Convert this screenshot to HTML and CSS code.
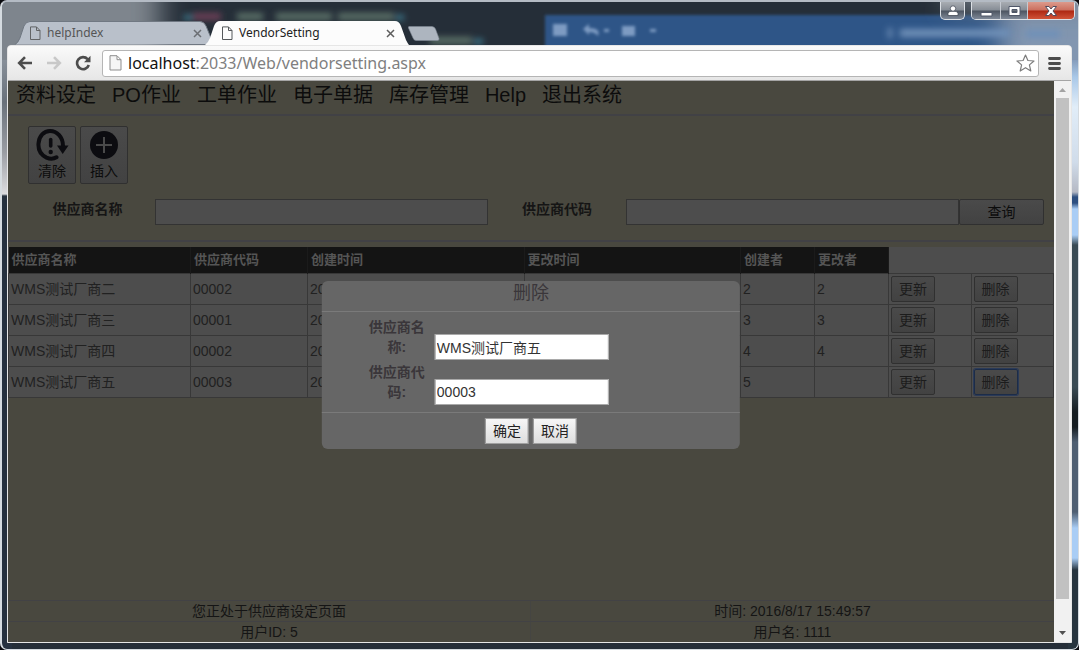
FILE: index.html
```html
<!DOCTYPE html>
<html lang="zh-CN">
<head>
<meta charset="utf-8">
<title>VendorSetting</title>
<link rel="stylesheet" href="styles.css">
</head>
<body>
<div class="window">
  <header class="titlebar">
    <svg class="glass" width="1079" height="60" viewBox="0 0 1079 60" aria-hidden="true">
      <defs>
        <filter id="soft" x="-20%" y="-50%" width="140%" height="200%"><feGaussianBlur stdDeviation="3"/></filter>
        <filter id="edge" x="-20%" y="-50%" width="140%" height="200%"><feGaussianBlur stdDeviation="1.500"/></filter>
        <filter id="wide" x="-50%" y="-50%" width="200%" height="200%"><feGaussianBlur stdDeviation="14"/></filter>
      </defs>
      <path d="M545 15H1100V70H545z" fill="#2e5487" filter="url(#edge)"/>
      <g filter="url(#wide)">
        <rect x="-40" y="-30" width="200" height="120" fill="#7e858d"/>
        <rect x="1000" y="10" width="130" height="80" fill="#8296b0"/>
        <rect x="950" y="-20" width="160" height="28" fill="#7d858f"/>
      </g>
      <g filter="url(#edge)" fill="#7e9bc2">
        <path d="M553 24h14v12h-14zM583 29l6-5v4q12 0 9 8q-3-4-9-4v3zM622 26h13v10h-13zM650 29h6v3h-6zM604 29h5v3h-5z"/>
      </g>
      <g filter="url(#soft)">
        <path d="M900 29h110v8h-110zM1026 30h34v8h-34zM888 28h4v10h-4z" fill="#7090b8"/>
        <path d="M193 13h28v7h-28z" fill="#6d4056"/><path d="M237 13h26v7h-26zM276 13h56v7h-56zM338 13h56v7h-56zM430 37h42v7h-42z" fill="#5c7168"/>
        <path d="M184 15h8v5h-8zM396 15h8v5h-8zM474 39h9v5h-9z" fill="#3e7c90"/>
      </g>
    </svg>
    <nav class="tabs" aria-label="标签页">
      <div class="tab tab-idle">
        <svg class="tab-shape" viewBox="0 0 198 24" preserveAspectRatio="none" aria-hidden="true"><path d="M0 23.500Q3 22 5 17L9 5Q11 .5 15 .5H186Q190 .5 192 5L197 17Q199 23 203 23.500" fill="#b9c0ca" stroke="#6f7782"/></svg>
        <div class="tab-content">
          <svg width="12" height="15" viewBox="0 0 12 15" fill="none" stroke="#626466"><path d="M1.500.900H7.500L11 4.500V13.500H1.500zM7.500 1V4.500H11"/></svg>
          <span class="tab-name">helpIndex</span>
          <button class="tab-close" aria-label="关闭 helpIndex"><svg width="9" height="9" viewBox="0 0 9 9" stroke="#6b6e73" stroke-width="1.500"><path d="M1 1L8 8M8 1L1 8"/></svg></button>
        </div>
      </div>
      <div class="tab tab-current">
        <svg class="tab-shape" viewBox="0 0 204 24" preserveAspectRatio="none" aria-hidden="true"><path d="M0 24Q3 22 5 17L9 5Q11 0 15 0H190Q194 0 196 5L201 19Q203 23 204 24" fill="#fcfcfc"/></svg>
        <div class="tab-content">
          <svg width="12" height="15" viewBox="0 0 12 15" fill="none" stroke="#55585b"><path d="M1.500.900H7.500L11 4.500V13.500H1.500zM7.500 1V4.500H11"/></svg>
          <span class="tab-name">VendorSetting</span>
          <button class="tab-close" aria-label="关闭 VendorSetting"><svg width="9" height="9" viewBox="0 0 9 9" stroke="#5d5d5d" stroke-width="1.500"><path d="M1 1L8 8M8 1L1 8"/></svg></button>
        </div>
      </div>
      <button class="new-tab" aria-label="新标签页"><svg width="32" height="15" viewBox="0 0 32 15"><path d="M1 .500H24Q26.500.500 27.500 3L31 12.500Q31.500 14.500 29.500 14.500H8Q6 14.500 5 12L.5 2Q0 .5 1 .5z" fill="#adb5bf" stroke="#7f8893" stroke-width=".6"/></svg></button>
    </nav>
    <div class="controls">
      <button class="control user" aria-label="用户"><svg width="12" height="11" viewBox="0 0 12 11" fill="#fff" stroke="#454b58" stroke-width=".8"><path d="M1 10.500V8.500Q1 6.500 4 6.300H8Q11 6.500 11 8.500V10.500z"/><circle cx="6" cy="3.500" r="2.700"/></svg></button>
      <div class="control-set">
        <button class="control" aria-label="最小化"><svg width="13" height="12" viewBox="0 0 13 12"><path d="M1 7.500H12V11H1z" fill="#fff" stroke="#50586a"/></svg></button>
        <button class="control control-max" aria-label="最大化"><svg width="13" height="12" viewBox="0 0 13 12"><path d="M1 1.500H12V10.500H1zM4 4.500V7.500H9V4.500z" fill="#fff" fill-rule="evenodd" stroke="#50586a"/></svg></button>
        <button class="control control-close" aria-label="关闭"><svg width="14" height="12" viewBox="0 0 14 12"><path d="M1.500 1.500H5L7 4L9 1.500H12.500L9 6L12.500 10.500H9L7 8L5 10.500H1.500L5 6z" fill="#fff" stroke="#514b5c"/></svg></button>
      </div>
    </div>
  </header>

  <div class="browser">
    <div class="toolbar">
      <button class="tool" aria-label="后退"><svg width="16" height="14" viewBox="0 0 16 14" fill="none" stroke="#4d4d4d" stroke-width="2.600"><path d="M15 7H2.500M8 1.200L2.200 7L8 12.800"/></svg></button>
      <button class="tool" aria-label="前进"><svg width="16" height="14" viewBox="0 0 16 14" fill="none" stroke="#c8c8c8" stroke-width="2.600"><path d="M1 7H13.500M8 1.200L13.800 7L8 12.800"/></svg></button>
      <button class="tool" aria-label="刷新"><svg width="16" height="16" viewBox="0 0 16 16"><path d="M12.600 4.200A6 6 0 1 0 13.800 10" fill="none" stroke="#4d4d4d" stroke-width="2.600"/><path d="M15.500.800V7.200H9z" fill="#4d4d4d"/></svg></button>
      <div class="address">
        <svg width="13" height="16" viewBox="0 0 13 16" fill="#f5f5f5" stroke="#8d8d8d"><path d="M1 .700H8L12 4.700V15H1zM8 1V4.700H12"/></svg>
        <div class="url"><span class="host">localhost</span>:2033/Web/vendorsetting.aspx</div>
        <button class="tool" aria-label="收藏"><svg width="19" height="18" viewBox="0 0 19 18" fill="#fff" stroke="#7d7d7d" stroke-width="1.200" stroke-linejoin="round"><path d="M9.500 1L11.900 6.500L18 7L13.400 10.900L14.800 17L9.500 13.700L4.200 17L5.600 10.900L1 7L7.100 6.500z"/></svg></button>
      </div>
      <button class="tool" aria-label="菜单"><svg width="13" height="13" viewBox="0 0 13 13" stroke="#4d4d4d" stroke-width="2.800" stroke-linecap="round"><path d="M1.500 1.500H11.500M1.500 6.500H11.500M1.500 11.500H11.500"/></svg></button>
    </div>

    <div class="viewport">
      <main class="page">
        <nav class="menu">
          <a href="#">资料设定</a><a href="#">PO作业</a><a href="#">工单作业</a><a href="#">电子单据</a><a href="#">库存管理</a><a href="#">Help</a><a href="#">退出系统</a>
        </nav>
        <section class="panel">
          <div class="actions">
            <button class="action">
              <svg width="34" height="34" viewBox="0 0 34 34"><path d="M21.500 29.300Q17 32 11.500 29.600C6 27 3 22 3.500 15.500C4 8 9 3 15 3C22 3 28 9 28 18" fill="none" stroke="#0c0c10" stroke-width="4" stroke-linecap="round"/><path d="M22 17.500H33.500L27.700 26z" fill="#0c0c10"/><path d="M15.700 11.500V18" stroke="#0c0c10" stroke-width="3.600" stroke-linecap="round"/><circle cx="15.700" cy="24" r="2.200" fill="#0c0c10"/></svg>
              清除
            </button>
            <button class="action">
              <svg width="34" height="34" viewBox="0 0 34 34"><circle cx="17" cy="17" r="14" fill="#0c0c10"/><path d="M9 17H25M17 9V25" stroke="#4a4a4a" stroke-width="2"/></svg>
              插入
            </button>
          </div>
          <form class="search">
            <label for="q-name">供应商名称</label>
            <input id="q-name" type="text">
            <label for="q-code">供应商代码</label>
            <input id="q-code" type="text">
            <button type="button">查询</button>
          </form>
        </section>

        <table class="vendors">
          <colgroup><col class="c-name"><col class="c-code"><col class="c-time"><col class="c-time"><col class="c-user"><col class="c-user"><col class="c-act"><col class="c-act"></colgroup>
          <thead>
            <tr><th>供应商名称</th><th>供应商代码</th><th>创建时间</th><th>更改时间</th><th>创建者</th><th>更改者</th><td colspan="2"></td></tr>
          </thead>
          <tbody>
            <tr><td>WMS测试厂商二</td><td>00002</td><td>20</td><td></td><td>2</td><td>2</td><td><button>更新</button></td><td><button>删除</button></td></tr>
            <tr><td>WMS测试厂商三</td><td>00001</td><td>20</td><td></td><td>3</td><td>3</td><td><button>更新</button></td><td><button>删除</button></td></tr>
            <tr><td>WMS测试厂商四</td><td>00002</td><td>20</td><td></td><td>4</td><td>4</td><td><button>更新</button></td><td><button>删除</button></td></tr>
            <tr><td>WMS测试厂商五</td><td>00003</td><td>20</td><td></td><td>5</td><td></td><td><button>更新</button></td><td><button class="focused">删除</button></td></tr>
          </tbody>
        </table>

        <footer class="status">
          <div>您正处于供应商设定页面</div><div>时间: 2016/8/17 15:49:57</div>
          <div>用户ID: 5</div><div>用户名: 1111</div>
        </footer>

        <form class="dialog" role="dialog" aria-labelledby="dialog-title">
          <h2 id="dialog-title">删除</h2>
          <div class="fields">
            <div class="field"><label for="d-name">供应商名称:</label><input id="d-name" type="text" value="WMS测试厂商五"></div>
            <div class="field"><label for="d-code">供应商代码:</label><input id="d-code" type="text" value="00003"></div>
          </div>
          <div class="dialog-actions"><button type="button">确定</button><button type="button">取消</button></div>
        </form>
      </main>
      <div class="scrollbar" aria-hidden="true">
        <svg width="17" height="17" viewBox="0 0 17 17"><path d="M5 11L8.500 7L12 11z" fill="#a3a3a3"/></svg>
        <div class="track"><div class="thumb"></div></div>
        <svg width="17" height="17" viewBox="0 0 17 17"><path d="M5 6L8.500 10L12 6z" fill="#505050"/></svg>
      </div>
    </div>
  </div>
</div>
</body>
</html>
```
FILE: styles.css
```css
* { box-sizing: border-box; }
body {
  margin: 0;
  background: #08080c;
  font: 14px/20px "Liberation Sans", "Noto Sans CJK SC", sans-serif;
}
button, input { font: inherit; }
button { cursor: pointer; }

.window {
  position: relative;
  display: flex;
  flex-direction: column;
  height: 100vh;
  padding: 0 6px 6px 5px;
  border: 1px solid #d5dbe0;
  border-width: 2px 1px 1px 2px;
  border-top-color: #b4bbc4;
  border-radius: 7px;
  overflow: hidden;
  background:
    linear-gradient(#7488a6 0 50px, #a9c8e8 75px, #e1edf8 105px, #d0dcea 160px, #b5b9c4 190px, #2d4f80 195px 201px, #a9cdf5 207px 233px, #3a4b54 243px 385px, #161d22 410px 425px, #4f5f72 440px 510px, #a9cdf5 526px 556px, #27343e 568px) right / 10px 100% no-repeat,
    linear-gradient(#868e98 0 60px, #69717b 100px, #9a9da3 150px, #dcdcdf 192px, #26313f 194px) left / 10px 100% no-repeat,
    #252e38;
}

.titlebar {
  position: relative;
  display: flex;
  justify-content: space-between;
  align-items: flex-start;
  height: 43px;
  flex: none;
}
.glass { position: absolute; left: -7px; top: -2px; width: calc(100% + 14px); height: 60px; }
.tabs { position: relative; display: flex; align-items: flex-start; padding: 19px 0 0 8px; }
.tab { display: grid; height: 24px; }
.tab > * { grid-area: 1 / 1; }
.tab-idle { width: 197px; }
.tab-current { width: 204px; margin-left: -7px; }
.tab-shape { width: 100%; height: 24px; }
.tab-content {
  display: flex;
  align-items: center;
  gap: 6px;
  padding: 0 10px 0 14px;
  font: 12px/24px "Noto Sans", sans-serif;
  color: #555;
}
.tab-current .tab-content { padding-right: 14px; padding-left: 16px; color: #222; }
.tab-name { flex: 1; }
.tab-close, .tool, .new-tab {
  display: grid;
  place-items: center;
  padding: 0;
  border: 0;
  background: none;
}
.new-tab { margin-top: 5px; margin-left: -1px; }

.controls { position: relative; display: flex; gap: 6px; margin-right: -3px; }
.control {
  display: grid;
  place-items: center;
  width: 29px;
  height: 17px;
  padding: 0;
  border: 0;
  border-right: 1px solid #c5cad1;
  background: linear-gradient(#a9adb2, #858c95 48%, #4c5460 52%, #7e8897);
}
.control.user, .control-set {
  border: 1px solid #dce0e5;
  border-top: 0;
  border-radius: 0 0 5px 5px;
  overflow: hidden;
}
.control.user { width: 25px; height: 18px; }
.control-set { display: flex; }
.control-max { width: 27px; }
.control-close { width: 46px; border-right: 0; background: linear-gradient(#dc9a8c, #cb6f5e 48%, #ad2712 52%, #d05338); }

.browser {
  position: relative;
  flex: 1;
  min-height: 0;
  display: flex;
  flex-direction: column;
  border: 1px solid #e6e6e6;
  border-radius: 4px 4px 0 0;
  background: #efefef;
  overflow: hidden;
}
.toolbar {
  display: flex;
  align-items: center;
  gap: 13px;
  height: 35px;
  padding: 0 10px 0 9px;
  border-bottom: 1px solid #a5a5a5;
  background: linear-gradient(#fafafa, #e6e6e6);
}
.address {
  flex: 1;
  display: flex;
  align-items: center;
  gap: 6px;
  height: 27px;
  margin-right: -4px;
  margin-left: -2px;
  padding: 0 3px 0 6px;
  border: 1px solid #b5b5b5;
  border-radius: 3px;
  background: #fff;
}
.url { flex: 1; font: 16px/25px "Noto Sans", sans-serif; color: #808080; }
.host { color: #111; }

.viewport { flex: 1; min-height: 0; display: flex; }
.page {
  position: relative;
  flex: 1;
  min-width: 0;
  display: flex;
  flex-direction: column;
  background: #49483f;
  color: #151515;
}
.menu {
  display: flex;
  gap: 16px;
  height: 35px;
  padding: 0 8px;
  border-bottom: 2px solid #414145;
  font-size: 20px;
  line-height: 29px;
}
.menu a { color: #0c0c0c; text-decoration: none; white-space: nowrap; }
.panel { padding: 10px 10px 15px 12px; border-bottom: 2px solid #414145; }
.actions { display: flex; gap: 4px; padding-left: 8px; }
.page button {
  border: 1px solid #303030;
  border-radius: 2px;
  background: linear-gradient(#4a4a4a, #424242);
  color: #1c1c1c;
}
.page .action {
  display: flex;
  flex-direction: column;
  align-items: center;
  width: 48px;
  height: 58px;
  padding: 1px 0 0;
  line-height: 18px;
  color: #0c0c0c;
}
.search {
  display: grid;
  grid-template-columns: 135px 1fr 138px 1fr 85px;
  margin-top: 15px;
}
.search label { text-align: center; font-weight: bold; }
.search input { min-width: 0; height: 26px; border: 1px solid #333; background: #4d4d4d; }
.page .search button { padding: 0; color: #0c0c0c; }

.vendors {
  width: 100%;
  margin-top: 5px;
  border-collapse: collapse;
  table-layout: fixed;
  background: #4d4d4d;
  color: #212121;
}
.c-name { width: 182px; }
.c-code { width: 117px; }
.c-time { width: 21%; }
.c-user { width: 74px; }
.c-act { width: 8%; }
.vendors th {
  height: 26px;
  padding: 0 3px;
  border-right: 1px solid #1b1b1b;
  background: #141414;
  color: #555;
  font-size: 13px;
  text-align: left;
}
.vendors tbody td { height: 31px; padding: 0 2px; border: 1px solid #383838; }
.vendors button, .dialog-actions button { display: block; width: 44px; height: 26px; padding: 0; }
.page .focused { border-color: #1c2c48; box-shadow: 0 0 0 1px #2a3a58; }

.status { display: grid; grid-template-columns: 1fr 1fr; margin-top: auto; text-align: center; }
.status div { height: 21px; border-top: 1px solid #424245; }
.status div:nth-child(odd) { border-right: 1px solid #454542; }

.dialog {
  position: absolute;
  top: 200px;
  left: 50%;
  width: 40%;
  transform: translateX(-50%);
  border-radius: 6px;
  background: #666;
  color: #3a363a;
}
.dialog h2 {
  height: 31px;
  margin: 0;
  border-bottom: 1px solid #7a7a7a;
  font-size: 18px;
  font-weight: normal;
  line-height: 24px;
  text-align: center;
}
.fields { padding: 5px 0 5px 45px; }
.field { display: flex; align-items: flex-end; gap: 8px; height: 45px; }
.field label { width: 60px; align-self: flex-start; font-weight: bold; text-align: center; }
.field input {
  width: 174px;
  height: 26px;
  margin-bottom: 2px;
  padding: 0 1px;
  border: 1px solid #a9a9a9;
  background: #fff;
  color: #333;
}
.dialog-actions {
  display: flex;
  justify-content: center;
  gap: 4px;
  padding: 5px;
  border-top: 1px solid #7a7a7a;
}
.page .dialog-actions button {
  border-color: #a0a0a0;
  border-radius: 0;
  background: linear-gradient(#f6f6f6, #dedede);
  color: #222;
}

.scrollbar { display: flex; flex-direction: column; width: 17px; background: #f1f1f1; }
.track { flex: 1; padding: 0 2px; }
.thumb { height: 95%; background: #c1c1c1; }
```
